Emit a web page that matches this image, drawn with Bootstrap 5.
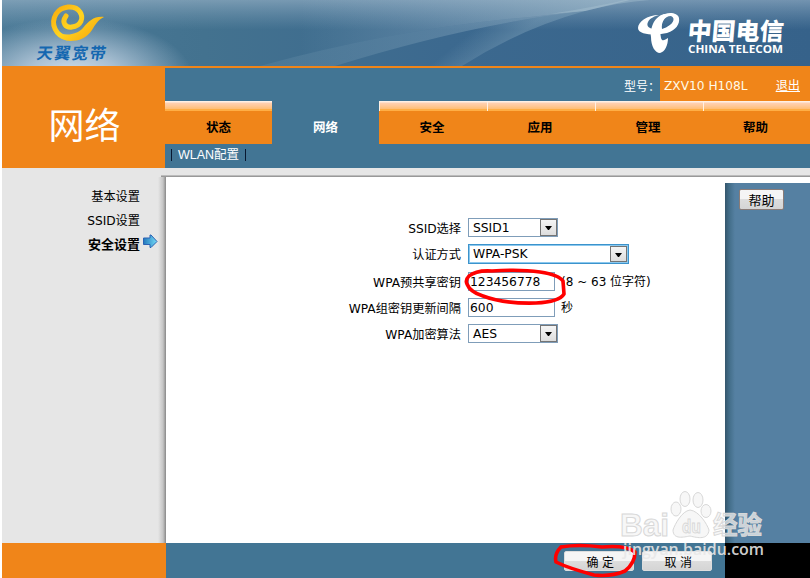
<!DOCTYPE html>
<html lang="zh-CN">
<head>
<meta charset="utf-8">
<title>ZXV10 H108L</title>
<meta name="viewport" content="width=device-width, initial-scale=1">
<link href="https://cdn.jsdelivr.net/npm/bootstrap@5.3.0/dist/css/bootstrap.min.css" rel="stylesheet">
<style>
:root{--teal:#427594;--orange:#f08519}
body{font-family:"DejaVu Sans","Noto Sans CJK SC",sans-serif;font-size:12px;line-height:18px;color:#000;background:#fff}
.page{width:810px;height:578px;padding-left:2px}
.banner{height:66px;background:radial-gradient(ellipse 120px 58px at 70px 76px,#d3e0ec 0,#a9c0d3 38%,#7d9db700 100%),linear-gradient(90deg,#4b7a97 0,#43728f 25%,#3c698f 55%,#36628a 100%)}
.art{height:66px;width:808px}
.area-title{width:163px;height:100px;padding:7px 0 0 2px;background:var(--orange);flex:none}
.area-title h1{font:400 36px/96px "Noto Sans CJK SC",sans-serif;margin:0;color:#fff}
.topline{border-top:2px solid var(--orange)}
.teal{background:var(--teal)}
.model-row{height:33px;color:#fff}
.model{width:150px;background:var(--orange);padding:2px 10px 0 4px;color:#fffbe8;font-size:12.2px}
.model a{color:#fff}
.tabs{height:43px}
.tab{width:108px;height:43px;background:linear-gradient(#fff0e4 0 1px,#ffd0b2 2px,#ffc896 5px,#ffbd73 8px,#ffae45 8px 10px,var(--orange) 10px);font-weight:700;padding-top:16px;color:#000;text-decoration:none;text-align:center;line-height:20px;position:relative;font-family:"Noto Sans CJK SC",sans-serif;font-size:12.5px;flex:none}
.tab.edge{width:107px}
.tab.on{width:107px;background:var(--teal);color:#fff}
.tab.sep{padding-right:2px}
.tab.sep::before{content:"";position:absolute;left:0;top:1px;width:1px;height:9px;background:#fff0e4}
.sub{height:24px;color:#fff;padding:2px 0 0 6px}
.sub span{display:inline-block;border:solid #081830;border-width:0 1px;height:12px;line-height:12px;padding:0 6px;font-size:12.5px;font-family:"Liberation Sans","Noto Sans CJK SC",sans-serif}
.strip{height:9px;background:#e6e6e6}
.strip i{display:block;height:9px;margin-left:159px;background:linear-gradient(transparent 7px,#bbb 7px 8px,#999 8px)}
.side{width:164px;height:366px;background:linear-gradient(90deg,#e6e6e6 156px,#c5c5c5 161px,#888 164px);padding:8px 8px 0 0}
.side li{height:24px;line-height:24px;padding-right:18px;text-align:right;white-space:nowrap;font-size:12.2px}
.side li.active{font-weight:700;font-size:13px;display:flex;justify-content:flex-end;padding-right:0}
.side svg{margin:1px 0 0 3px}
.content{width:559px;height:366px;padding-top:38px}
.line{height:26px}
.line.tall{height:28px}
.line label{width:295px;text-align:right;margin-right:7px;padding-top:4px;line-height:20px;font-size:12.2px;white-space:nowrap}
.pick,.entry{height:19px;border:1px solid #7f9db9;line-height:19px;font-size:12.3px;background:#fff}
.pick{width:90px;padding-left:4px;margin-top:3px;display:flex;justify-content:space-between}
.pick.focus-in{width:161px;height:20px;border:1px solid #3c93cc;box-shadow:0 0 0 1px #8bc8ee inset;margin-top:3px}
.pick b{width:17px;height:17px;border:1px solid #747474;background:linear-gradient(#f5f5f5,#ddd);display:block;padding:6px 4px}
.focus-in b{margin-top:1px;margin-right:1px;height:16px}
.pick b::after{content:"";display:block;border:solid transparent;border-width:4px 3.5px 0;border-top-color:#000}
.entry{width:87px;padding:0 1px;margin-top:3px}
.hint{margin-left:6px;margin-top:4px;font-size:12px;white-space:nowrap}
.assist{width:85px;height:360px;margin-top:6px;background:linear-gradient(90deg,#34566c 0,#426d88 4px,#5580a2 10px);padding:6px 0 0 14px}
.key{height:20px;border:1px solid #ddd;border-radius:2px;background:linear-gradient(#f5f5f5 0 48%,#ddd 50%,#d5d5d5);padding:0;color:#000;text-align:center;font-size:13px;line-height:19px;display:block;font-family:"Noto Sans CJK SC",sans-serif}
.assist .key{width:45px;border-color:#8a7c78;height:21px;line-height:20px}
.foot{height:35px}
.foot .left-end{width:164px;background:var(--orange)}
.foot .mid{width:559px;padding:8px 13px 0 0}
.foot .key{width:70px;font-size:12px;letter-spacing:.5px;padding-left:3px}
.foot .right-end{width:85px;background:#000}
.overlay{position:absolute;left:0;top:0;pointer-events:none}
</style>
<script src="https://cdn.jsdelivr.net/npm/bootstrap@5.3.0/dist/js/bootstrap.bundle.min.js"></script>
</head>
<body>
<div class="page overflow-hidden position-relative">
<header class="banner">
<svg class="art d-block" viewBox="2 0 808 66">
<defs>
<linearGradient id="topglow" x1="0" x2="0" y1="0" y2="1"><stop offset="0" stop-color="#a5bccf" stop-opacity=".55"/><stop offset=".45" stop-color="#8eacc3" stop-opacity="0"/></linearGradient>
<linearGradient id="ribbon" gradientUnits="userSpaceOnUse" x1="260" x2="625" y1="0" y2="0"><stop offset="0" stop-color="#8fb0c4" stop-opacity=".12"/><stop offset="1" stop-color="#a9c2d1" stop-opacity=".45"/></linearGradient>
<linearGradient id="upper" gradientUnits="userSpaceOnUse" x1="300" x2="600" y1="0" y2="0"><stop offset="0" stop-color="#a4bece" stop-opacity="0"/><stop offset="1" stop-color="#a4bece" stop-opacity=".6"/></linearGradient>
<linearGradient id="tail" gradientUnits="userSpaceOnUse" x1="480" x2="500" y1="25" y2="50"><stop offset="0" stop-color="#8fb0c4" stop-opacity="0"/><stop offset="1" stop-color="#8fb0c4" stop-opacity=".35"/></linearGradient>
<linearGradient id="gold" gradientUnits="userSpaceOnUse" x1="55" x2="90" y1="4" y2="41"><stop offset="0" stop-color="#f6a90e"/><stop offset=".5" stop-color="#ffd420"/><stop offset="1" stop-color="#f8ad0e"/></linearGradient></defs>
<rect x="2" width="808" height="66" fill="url(#topglow)"/>
<path d="M260 66Q400 28 530 17L585 11L630 0H300V50Z" fill="url(#upper)"/>
<path d="M260 66Q400 28 530 17L585 11Q470 24 335 66Z" fill="url(#ribbon)"/>
<path d="M335 66Q470 24 585 11Q520 29 462 66Z" fill="url(#tail)"/>
<path d="M585 11Q620 2 650 0H625Q600 6 550 14Z" fill="#a9c2d1" opacity=".4"/>
<path d="M66 16C61 23 66 28 72 27C81 26 84 18 80 12C75 4 61 6 56 14C50 24 56 36 67 38" fill="none" stroke="url(#gold)" stroke-width="5" stroke-linecap="round"/>
<path d="M54 29C61 37 76 36 83 28C89 21 94 16 104 17C98 20 95 25 92 30C87 38 79 41 70 41C62 40 56 36 54 29Z" fill="url(#gold)"/>
<text transform="translate(36 59) skewX(-9)" font-family="Noto Sans CJK SC,sans-serif" font-weight="600" font-size="16" textLength="69" lengthAdjust="spacing" fill="#1467b0">天翼宽带</text>
<g fill="#fff"><path d="M659 15C647 15 638 22 638 28C638 34 650 35 658 34.500L667 33C676 30 680 24 679 18C678 13 670 12 665 14C657 17 655 25 655 29C649 29 646 26 648 22C650 18 655 16 659 15ZM671 16C676 18 674 25 662 29C661 23 664 16 671 16Z" fill-rule="evenodd"/><path d="M664 14C653 17 650 30 651 37C651 46 655 53 660 53C665 52 668 45 668 38C665 40 662 42 661 38C659 28 662 19 668 15Z"/>
<text transform="translate(687 40) skewX(-5)" font-family="Noto Sans CJK SC,sans-serif" font-weight="900" font-size="24" textLength="96" lengthAdjust="spacing">中国电信</text>
<text x="688" y="53" font-family="Open Sans,sans-serif" font-weight="700" font-size="10.500" textLength="95" lengthAdjust="spacingAndGlyphs">CHINA TELECOM</text></g>
</svg>
</header>
<div class="topline d-flex">
<div class="area-title text-center"><h1>网络</h1></div>
<div class="flex-grow-1 teal">
<div class="model-row d-flex justify-content-end align-items-stretch"><span class="align-self-center pt-1">型号：</span><div class="model d-flex align-items-center justify-content-between"><span>ZXV10 H108L</span><a href="#">退出</a></div></div>
<nav class="tabs d-flex"><a class="tab edge" href="#">状态</a><a class="tab on" href="#">网络</a><a class="tab sep" href="#">安全</a><a class="tab sep" href="#">应用</a><a class="tab sep" href="#">管理</a><a class="tab sep edge" href="#">帮助</a></nav>
<div class="sub"><span>WLAN配置</span></div>
</div></div>
<div class="strip"><i></i></div>
<main class="d-flex">
<ul class="side list-unstyled m-0"><li>基本设置</li><li>SSID设置</li><li class="active">安全设置<svg width="15" height="15" viewBox="0 0 15 15"><defs><linearGradient id="arr"><stop stop-color="#2378bc"/><stop offset="1" stop-color="#75dcf6"/></linearGradient></defs><path d="M.5 4H7V1H8L14 7.500L8 13.500H7V10.500H.5Z" fill="url(#arr)" stroke="#2b62b4"/></svg></li></ul>
<form class="content">
<div class="line d-flex"><label>SSID选择</label><div class="pick">SSID1<b></b></div></div>
<div class="line tall d-flex"><label>认证方式</label><div class="pick focus-in">WPA-PSK<b></b></div></div>
<div class="line d-flex"><label>WPA预共享密钥</label><div class="entry">123456778</div><span class="hint">(8 ~ 63 位字符)</span></div>
<div class="line d-flex"><label>WPA组密钥更新间隔</label><div class="entry">600</div><span class="hint">秒</span></div>
<div class="line d-flex"><label>WPA加密算法</label><div class="pick">AES<b></b></div></div>
</form>
<aside class="assist"><button class="key">帮助</button></aside>
</main>
<footer class="foot d-flex"><div class="left-end"></div><div class="mid teal d-flex justify-content-end gap-2"><button class="key">确 定</button><button class="key">取 消</button></div><div class="right-end"></div></footer>
<svg class="overlay" width="810" height="578" viewBox="0 0 810 578">
<g fill="none" stroke="red" stroke-width="3.600" stroke-linecap="round" stroke-linejoin="round"><path d="M469 276Q476 270 492 271Q520 269 540 272Q559 275 563 281L564 294Q559 302 536 303Q504 304 483 296Q470 292 467 284Q465 280 469 276"/><path d="M561 547Q554 554 556 562Q568 568 594 575Q611 577 625 571Q635 563 635 552Q626 545 602 547Q578 544 561 547"/></g>
<g font-family="Open Sans,sans-serif" fill="#f4f4f4" fill-opacity=".72" stroke="#d8d8d8" stroke-width="1">
<text x="620" y="536" font-family="Liberation Sans,sans-serif" font-weight="700" font-size="31" textLength="49" lengthAdjust="spacingAndGlyphs">Bai</text>
<ellipse cx="676" cy="509" rx="5" ry="7"/><ellipse cx="685" cy="499" rx="5" ry="7.500"/><ellipse cx="698" cy="500" rx="5" ry="7.500"/><ellipse cx="706" cy="511" rx="5" ry="6.500"/><path d="M690 510C682 511 675 524 673 530C673 540 684 537 690 536C698 538 708 540 709 530C707 524 699 511 690 510Z"/>
<text x="682" y="533" font-weight="700" font-size="18" textLength="19" lengthAdjust="spacingAndGlyphs">du</text>
<text x="713" y="534" font-family="Noto Sans CJK SC,sans-serif" font-weight="700" font-size="25" textLength="49" lengthAdjust="spacingAndGlyphs">经验</text></g>
<text x="623" y="555" font-family="Open Sans,sans-serif" font-weight="600" font-size="16" textLength="141" lengthAdjust="spacingAndGlyphs" fill="#e8e8e8" fill-opacity=".9">jingyan.baidu.com</text>
</svg>
</div>
</body>
</html>
